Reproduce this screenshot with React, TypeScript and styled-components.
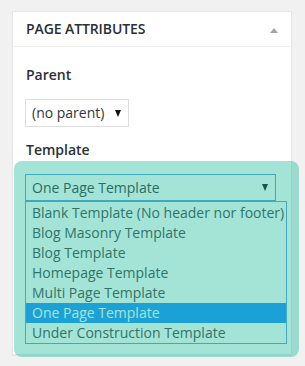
import React from "react";
import styled, { createGlobalStyle } from "styled-components";

const GlobalStyle = createGlobalStyle`
  html, body {
    margin: 0;
    padding: 0;
    background: #f1f1f1;
  }
  body {
    font-family: "Open Sans", "Liberation Sans", sans-serif;
    font-size: 14px;
    color: #32373c;
  }
`;

const templates = [
  "Blank Template (No header nor footer)",
  "Blog Masonry Template",
  "Blog Template",
  "Homepage Template",
  "Multi Page Template",
  "One Page Template",
  "Under Construction Template",
];

const Page = styled.div`
  position: relative;
  width: 305px;
  height: 366px;
  padding: 11px 0 0 12px;
  box-sizing: border-box;
`;

const Panel = styled.div`
  width: 280px;
  box-sizing: border-box;
  background: #fff;
  border: 1px solid #e5e5e5;
  box-shadow: 0 1px 1px rgba(0, 0, 0, 0.04);
`;

const Header = styled.div`
  display: flex;
  align-items: center;
  justify-content: space-between;
  height: 34px;
  padding: 0 13px 0 13px;
  border-bottom: 1px solid #eee;
`;

const Title = styled.h2`
  margin: 0;
  font-size: 14px;
  font-weight: 600;
  line-height: 1.4;
  color: #2b3035;
  text-transform: uppercase;
  letter-spacing: -0.1px;
`;

const Toggle = styled.span`
  width: 0;
  height: 0;
  border-left: 4px solid transparent;
  border-right: 4px solid transparent;
  border-bottom: 5px solid #a0a5aa;
  margin-top: 2px;
`;

const Body = styled.div`
  display: flex;
  flex-direction: column;
  padding: 17px 12px 10px;
`;

const Label = styled.p<{ $gap: number }>`
  margin: 0 0 ${(p) => p.$gap}px;
  font-size: 14px;
  font-weight: 600;
  line-height: 21px;
  color: #2b3035;
  padding-left: 1px;
`;

const Select = styled.div<{ $width: number; $focus?: boolean }>`
  display: flex;
  align-items: center;
  justify-content: space-between;
  width: ${(p) => p.$width}px;
  height: ${(p) => (p.$focus ? 27 : 28)}px;
  box-sizing: border-box;
  padding: 0 7px 0 6px;
  border: 1px solid ${(p) => (p.$focus ? "#5b9dd9" : "#ddd")};
  background: #fff;
  font-size: 14px;
  color: #32373c;
  line-height: 1;
`;

const Arrow = styled.span`
  width: 0;
  height: 0;
  border-left: 3.5px solid transparent;
  border-right: 3.5px solid transparent;
  border-top: 7px solid #111;
`;

const Spacer = styled.div`
  height: 12px;
`;

const Menu = styled.ul`
  list-style: none;
  margin: 0;
  padding: 1px 0 0;
  width: 262px;
  box-sizing: border-box;
  border: 1px solid #5b9dd9;
  background: #fff;
`;

const Option = styled.li<{ $active?: boolean }>`
  height: 20px;
  line-height: 20px;
  padding-left: 6px;
  font-size: 14px;
  white-space: nowrap;
  color: ${(p) => (p.$active ? "#fff" : "#444")};
  background: ${(p) => (p.$active ? "#1e90ff" : "transparent")};
`;

const Highlight = styled.div`
  position: absolute;
  left: 14px;
  top: 161px;
  width: 285px;
  height: 196px;
  border-radius: 8px;
  background: rgba(26, 188, 156, 0.4);
  pointer-events: none;
`;

export default function App() {
  return (
    <Page>
      <GlobalStyle />
      <Panel>
        <Header>
          <Title>Page Attributes</Title>
          <Toggle />
        </Header>
        <Body>
          <Label $gap={14}>Parent</Label>
          <Select $width={104}>
            (no parent)
            <Arrow />
          </Select>
          <Spacer />
          <Label $gap={14}>Template</Label>
          <Select $width={251} $focus>
            One Page Template
            <Arrow />
          </Select>
          <Menu>
            {templates.map((t) => (
              <Option key={t} $active={t === "One Page Template"}>
                {t}
              </Option>
            ))}
          </Menu>
        </Body>
      </Panel>
      <Highlight />
    </Page>
  );
}
